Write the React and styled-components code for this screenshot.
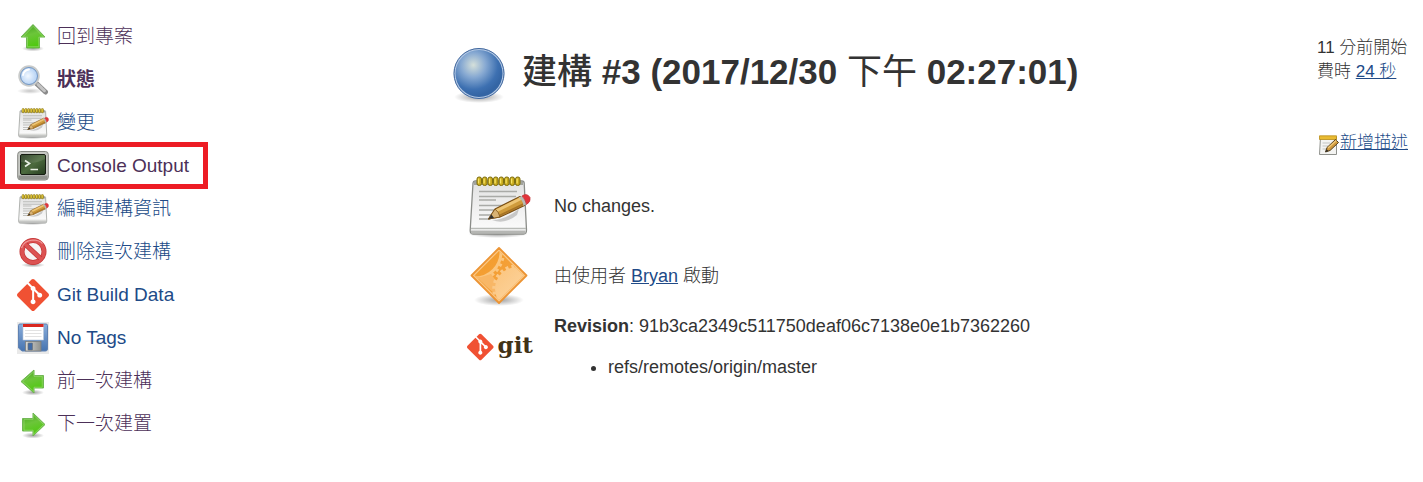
import React from "react";
import styled, { createGlobalStyle } from "styled-components";
import { SiGit } from "react-icons/si";

const Global = createGlobalStyle`
  * { box-sizing: border-box; }
  body {
    margin: 0;
    background: #fff;
    color: #333;
    font-family: "Liberation Sans", "Noto Sans CJK TC", sans-serif;
    font-size: 17px;
    line-height: 24px;
    font-weight: 300;
  }
`;

const Page = styled.div`
  display: flex;
  align-items: flex-start;
`;

const SideNav = styled.nav`
  flex: 0 0 450px;
  padding-top: 15px;
`;

const TaskList = styled.ul`
  list-style: none;
  margin: 0;
  padding: 0;
`;

const TaskItem = styled.li`
  position: relative;
  display: flex;
  height: 43px;
  padding-left: 17px;
`;

const TaskLink = styled.a`
  display: flex;
  align-items: center;
  gap: 8px;
  font-size: 19px;
  text-decoration: none;
  color: ${(p) => (p.$visited ? "#4c3058" : "#204a87")};
  font-weight: ${(p) => (p.$current ? 700 : 300)};
  svg { flex: none; }
`;

const Highlight = styled.span`
  position: absolute;
  top: -2px;
  left: 0;
  width: 208px;
  height: 47px;
  border: 5px solid #ed1c24;
  pointer-events: none;
`;

const Main = styled.main`
  flex: 1;
  min-width: 0;
  padding-top: 46px;
`;

const Header = styled.header`
  display: flex;
  align-items: center;
  gap: 14px;
  height: 58px;
  margin-bottom: 70px;
`;

const Title = styled.h1`
  margin: 0;
  padding-bottom: 6px;
  font-size: 35px;
  line-height: 50px;
  font-weight: 700;
`;

const TitleHan = styled.span`
  font-weight: ${(p) => (p.$light ? 400 : 500)};
`;

const Summary = styled.div`
  display: flex;
  flex-direction: column;
  gap: 6px;
  font-size: 18px;
`;

const SummaryRow = styled.section`
  display: grid;
  grid-template-columns: 66px 1fr;
  align-items: center;
  gap: 21px;
  min-height: 64px;
  padding-left: 17px;
`;

const Line = styled.p`
  margin: 0;
`;

const Label = styled.b`
  font-weight: 700;
`;

const Link = styled.a`
  color: #204a87;
  text-decoration: underline;
`;

const RefList = styled.ul`
  margin: 17px 0 0;
  padding-left: 54px;
`;

const GitLogo = styled.div`
  display: flex;
  align-items: center;
  gap: 4px;
  color: #f05133;
`;

const GitWord = styled.span`
  font-family: "DejaVu Serif", serif;
  font-weight: 700;
  font-size: 23px;
  padding-bottom: 4px;
  color: #413216;
`;

const Aside = styled.aside`
  flex: none;
  padding: 36px 15px 0 0;
`;

const AddDescription = styled.div`
  display: flex;
  align-items: center;
  margin-top: 46px;
  svg { margin-top: 4px; }
`;

function Defs() {
  return (
    <svg width="0" height="0" style={{ display: "block" }} aria-hidden="true">
      <defs>
        <linearGradient id="green" x1="0" y1="0" x2="0.3" y2="1">
          <stop offset="0" stopColor="#3f9f1c" />
          <stop offset="0.5" stopColor="#6cc53a" />
          <stop offset="1" stopColor="#4fc90f" />
        </linearGradient>
        <linearGradient id="paper" x1="0" y1="0" x2="0" y2="1">
          <stop offset="0" stopColor="#e2e2e2" />
          <stop offset="1" stopColor="#fdfdfd" />
        </linearGradient>
        <radialGradient id="shade">
          <stop offset="0" stopColor="#000" stopOpacity="0.38" />
          <stop offset="1" stopColor="#000" stopOpacity="0" />
        </radialGradient>
        <radialGradient id="ball" cx="0.38" cy="0.32" r="0.65">
          <stop offset="0" stopColor="#d5e0da" />
          <stop offset="0.4" stopColor="#87a9d2" />
          <stop offset="0.8" stopColor="#3d70b1" />
          <stop offset="1" stopColor="#3465a4" />
        </radialGradient>
        <radialGradient id="lens" cx="0.45" cy="0.5" r="0.6">
          <stop offset="0" stopColor="#f2f8ff" />
          <stop offset="1" stopColor="#a5c8f2" />
        </radialGradient>
        <linearGradient id="screen" x1="0" y1="0" x2="1" y2="1">
          <stop offset="0" stopColor="#20331a" />
          <stop offset="0.5" stopColor="#4c6b3e" />
          <stop offset="1" stopColor="#263c1f" />
        </linearGradient>
        <linearGradient id="orange" x1="0" y1="0" x2="1" y2="1">
          <stop offset="0" stopColor="#f39a25" />
          <stop offset="1" stopColor="#f5a64a" />
        </linearGradient>
        <linearGradient id="peach" x1="0" y1="0" x2="1" y2="1">
          <stop offset="0" stopColor="#fbc47c" />
          <stop offset="1" stopColor="#fddcb0" />
        </linearGradient>
        <linearGradient id="disk" x1="0" y1="0" x2="0" y2="1">
          <stop offset="0" stopColor="#8aaddb" />
          <stop offset="1" stopColor="#4674b0" />
        </linearGradient>
        <linearGradient id="metal" x1="0" y1="0" x2="1" y2="0">
          <stop offset="0" stopColor="#d8d8d6" />
          <stop offset="1" stopColor="#8e908c" />
        </linearGradient>
        <clipPath id="diamond">
          <path d="M32 7L56.500 31.500L32 56L7.500 31.500Z" />
        </clipPath>
      </defs>
    </svg>
  );
}

const arrows = {
  up: "M16 3.500L28 16H22.500V27H9.500V16H4Z",
  left: "M4 16.500L17 5V10.500H26.500V23H17V28Z",
  right: "M28 16.500L16 5V10.500H5.500V23H16V28Z",
};

function ArrowIcon({ dir }) {
  return (
    <svg width="32" height="32" viewBox="0 0 32 32" aria-hidden="true">
      <ellipse cx="16" cy="27.500" rx="11" ry="3" fill="url(#shade)" />
      <path d={arrows[dir]} fill="url(#green)" stroke="#6fb653" strokeLinejoin="round" />
      <path d={arrows[dir]} fill="none" stroke="#a6dd84" strokeWidth="0.8" strokeOpacity="0.8" transform="translate(2.200 2.200) scale(0.870)" />
    </svg>
  );
}

function SearchIcon() {
  return (
    <svg width="32" height="32" viewBox="0 0 32 32" aria-hidden="true">
      <ellipse cx="13" cy="27" rx="13" ry="3" fill="url(#shade)" opacity="0.6" />
      <path d="M19.500 19.500L28.500 28" stroke="#8a8a8a" strokeWidth="5" strokeLinecap="round" />
      <path d="M21 20.500L28.500 27.800" stroke="#c4c4c4" strokeWidth="3" strokeLinecap="round" strokeDasharray="2 1.500" />
      <circle cx="12" cy="12" r="9.500" fill="url(#lens)" stroke="#c9cbca" strokeWidth="2.500" />
      <circle cx="12" cy="12" r="8.500" fill="none" stroke="#6791c6" strokeWidth="0.9" />
      <path d="M6 11Q7 6 12 5.500" fill="none" stroke="#fff" strokeWidth="1.800" strokeLinecap="round" />
    </svg>
  );
}

function NotepadIcon({ size = 32 }) {
  return (
    <svg width={size} height={size} viewBox="0 0 64 64" aria-hidden="true">
      <ellipse cx="31" cy="60" rx="30" ry="4" fill="url(#shade)" />
      <path d="M8 7H55Q57 7 57.200 9L59.500 56Q59.500 60 56.500 60H6Q3 60 3.200 56L6 9Q6.200 7 8 7Z" fill="url(#paper)" stroke="#8a8c88" strokeWidth="1.300" />
      <path d="M4 54.500H59" stroke="#b9bbb7" strokeWidth="1.300" />
      <path d="M4 58H58.500" stroke="#b5b6b3" strokeWidth="3" />
      <path d="M7 9.500H56" stroke="#a2a49e" strokeWidth="3" />
      {[10, 15.500, 21, 26.500, 32, 37.500, 43, 48.500].map((x) => (
        <g key={x}>
          <rect x={x} y="3" width="4.500" height="8.500" rx="2" fill="#c8a91c" stroke="#7e6f10" strokeWidth="1" />
          <path d={`M${x + 1.6} 4.500V9.500`} stroke="#f7e565" strokeWidth="1.300" />
        </g>
      ))}
      <path d="M12 17.500H50M12 22.500H49M12 26H29M12 31.500H46M12 36H40M12 41H28M12 45H23" stroke="#a9aaa7" strokeWidth="1.400" />
      <path d="M25 46Q38 46 52 35L50 41Q38 51 25 46Z" fill="#000" opacity="0.18" />
      <path d="M21.500 45L28 35L53 22.500Q58 25 57.500 31.500L33 43Z" fill="#cf9b3c" stroke="#7b5118" strokeWidth="1.200" strokeLinejoin="round" />
      <path d="M29 37L54 24.500" stroke="#edc575" strokeWidth="3" />
      <path d="M32.500 41.500L56.500 30" stroke="#a87425" strokeWidth="1.800" />
      <path d="M21.500 45L28 35Q32 38 33 43Z" fill="#d9b375" stroke="#7b5118" strokeWidth="0.8" />
      <path d="M21.500 45L24.500 40.500L27 44Z" fill="#333" />
      <path d="M51.500 23.500L55 22L59.500 29.500L56.500 32Q56 26 51.500 23.500Z" fill="#b8bbb5" />
      <path d="M55 22Q60 18.500 63 23.500Q64 28 59.500 30.500Q58.500 25 55 22Z" fill="#e3343b" stroke="#c23a3d" strokeWidth="0.8" />
    </svg>
  );
}

function EditNoteIcon() {
  return (
    <svg width="23" height="22" viewBox="0 0 23 22" aria-hidden="true">
      <path d="M3.500 3H19.500V20.500H2.500Z" fill="#f4f4f2" stroke="#8f918c" />
      <path d="M2.500 1.800H19.500V5.500H2.500Z" fill="#e9bb32" stroke="#b98d17" strokeWidth="0.8" />
      <path d="M5.500 9H13M5.500 12H11M5.500 15H9" stroke="#c3c4c1" />
      <path d="M8.500 18L10 13.500L18.500 5.500L21.500 8.500L13 16.500Z" fill="#d09a3e" stroke="#54401f" strokeLinejoin="round" />
      <path d="M11 14L19.300 6.500" stroke="#f0c878" strokeWidth="1.300" />
      <path d="M8.500 18L9.500 15.200L11.500 17Z" fill="#2d2d2d" />
    </svg>
  );
}

function TerminalIcon() {
  return (
    <svg width="32" height="32" viewBox="0 0 32 32" aria-hidden="true">
      <rect x="0.700" y="1.500" width="30.600" height="28.500" rx="3" fill="#c7c9c4" stroke="#858782" />
      <path d="M1.500 25.500H30.500V28Q30 29.500 28 29.500H4Q1.500 29.500 1.500 27Z" fill="#92948f" />
      <rect x="3.500" y="4.500" width="25" height="20" rx="1.500" fill="url(#screen)" stroke="#161d12" />
      <path d="M4 12Q17 15 28 9V5H4Z" fill="#fff" opacity="0.1" />
      <path d="M8 10.500L12.500 13.500L8 16.500" fill="none" stroke="#e8efe4" strokeWidth="1.700" />
      <path d="M13.500 19.500H21" stroke="#e8efe4" strokeWidth="1.500" />
    </svg>
  );
}

function NoEntryIcon() {
  return (
    <svg width="32" height="32" viewBox="0 0 32 32" aria-hidden="true">
      <ellipse cx="16" cy="29" rx="12" ry="2.500" fill="url(#shade)" />
      <circle cx="16" cy="15.500" r="11" fill="#f6f4f4" stroke="#c43535" strokeWidth="5" />
      <circle cx="16" cy="15.500" r="11" fill="none" stroke="#dc5252" strokeWidth="3.600" />
      <path d="M8.500 8.500L23.500 22.500" stroke="#c43535" strokeWidth="5" />
      <path d="M8 8L24 23" stroke="#dc5252" strokeWidth="3.600" />
      <path d="M4.500 12Q7 4.500 16 4Q22 4 25.500 7.500" fill="none" stroke="#f09a9a" strokeWidth="1.200" />
    </svg>
  );
}

function FloppyIcon() {
  return (
    <svg width="32" height="32" viewBox="0 0 32 32" aria-hidden="true">
      <rect x="0" y="0" width="32" height="32" fill="#e9e9e9" />
      <path d="M3 2H29Q30.500 2 30.500 3.500V27Q30.500 29 28.500 29H5L1.500 26V3.500Q1.500 2 3 2Z" fill="url(#disk)" stroke="#5f82b3" />
      <rect x="6" y="2.500" width="20.500" height="15.500" fill="#fff" stroke="#b9c6d8" strokeWidth="0.6" />
      <rect x="6" y="2" width="20.500" height="3" fill="#d9271f" />
      <path d="M8 8.500H24.500M8 11.500H24.500M8 14.500H24.500" stroke="#e2e2e2" />
      <rect x="8.500" y="19.500" width="15.500" height="9.500" fill="url(#metal)" stroke="#7b7e7d" strokeWidth="0.8" />
      <rect x="11" y="21" width="4.500" height="7" rx="0.500" fill="#426ba5" stroke="#6a6d6d" strokeWidth="0.6" />
    </svg>
  );
}

function BallIcon() {
  return (
    <svg width="58" height="58" viewBox="0 0 58 58" aria-hidden="true">
      <ellipse cx="29" cy="51" rx="25" ry="6" fill="url(#shade)" />
      <circle cx="29" cy="27.500" r="25.500" fill="#b4c9e5" />
      <circle cx="29" cy="27.500" r="25" fill="none" stroke="#42689d" />
      <circle cx="29" cy="27.500" r="23.500" fill="url(#ball)" />
    </svg>
  );
}

function DiamondIcon() {
  return (
    <svg width="64" height="64" viewBox="0 0 64 64" aria-hidden="true">
      <ellipse cx="32" cy="56" rx="25" ry="6" fill="url(#shade)" />
      <path d="M32 4L59.500 31.500L32 59L4.500 31.500Z" fill="#fbc987" stroke="#ec9434" strokeWidth="1.800" strokeLinejoin="round" />
      <g clipPath="url(#diamond)">
        <rect width="64" height="64" fill="url(#orange)" />
        <circle cx="8" cy="8" r="26" fill="none" stroke="#fbc67f" strokeWidth="3" />
        <circle cx="8" cy="8" r="28.500" fill="none" stroke="#fbc67f" strokeWidth="3" strokeDasharray="3 3" />
        <path d="M8 31.500L20 43L28 50L30 38L24 30L14 33Z" fill="#f8b766" />
        <circle cx="50" cy="45" r="22" fill="url(#peach)" />
        <circle cx="50" cy="45" r="23" fill="none" stroke="#fbc988" strokeWidth="3.500" strokeDasharray="3 3" />
      </g>
    </svg>
  );
}

const tasks = [
  { text: "回到專案", icon: <ArrowIcon dir="up" />, visited: true },
  { text: "狀態", icon: <SearchIcon />, visited: true, current: true },
  { text: "變更", icon: <NotepadIcon /> },
  { text: "Console Output", icon: <TerminalIcon />, visited: true, highlighted: true },
  { text: "編輯建構資訊", icon: <NotepadIcon /> },
  { text: "刪除這次建構", icon: <NoEntryIcon /> },
  { text: "Git Build Data", icon: <SiGit size={32} color="#f05133" aria-hidden="true" /> },
  { text: "No Tags", icon: <FloppyIcon /> },
  { text: "前一次建構", icon: <ArrowIcon dir="left" />, visited: true },
  { text: "下一次建置", icon: <ArrowIcon dir="right" />, visited: true },
];

export default function App() {
  return (
    <>
      <Global />
      <Defs />
      <Page>
        <SideNav>
          <TaskList>
            {tasks.map((t) => (
              <TaskItem key={t.text}>
                <TaskLink href="#" $visited={t.visited} $current={t.current}>
                  {t.icon}
                  <span>{t.text}</span>
                </TaskLink>
                {t.highlighted && <Highlight />}
              </TaskItem>
            ))}
          </TaskList>
        </SideNav>
        <Main>
          <Header>
            <BallIcon />
            <Title>
              <TitleHan>建構</TitleHan> #3 (2017/12/30 <TitleHan $light>下午</TitleHan> 02:27:01)
            </Title>
          </Header>
          <Summary>
            <SummaryRow>
              <NotepadIcon size={64} />
              <Line>No changes.</Line>
            </SummaryRow>
            <SummaryRow>
              <DiamondIcon />
              <Line>
                由使用者 <Link href="#">Bryan</Link> 啟動
              </Line>
            </SummaryRow>
            <SummaryRow>
              <GitLogo>
                <SiGit size={28} aria-hidden="true" />
                <GitWord>git</GitWord>
              </GitLogo>
              <div>
                <Line>
                  <Label>Revision</Label>: 91b3ca2349c511750deaf06c7138e0e1b7362260
                </Line>
                <RefList>
                  <li>refs/remotes/origin/master</li>
                </RefList>
              </div>
            </SummaryRow>
          </Summary>
        </Main>
        <Aside>
          <Line>11 分前開始</Line>
          <Line>
            費時 <Link href="#">24 秒</Link>
          </Line>
          <AddDescription>
            <EditNoteIcon />
            <Link href="#">新增描述</Link>
          </AddDescription>
        </Aside>
      </Page>
    </>
  );
}
